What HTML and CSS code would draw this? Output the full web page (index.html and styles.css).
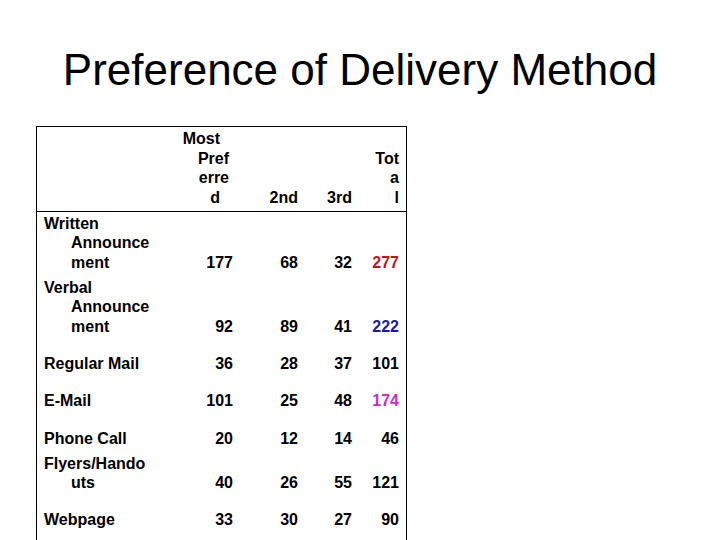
FILE: index.html
```html
<!DOCTYPE html>
<html>
<head>
<meta charset="utf-8">
<link rel="stylesheet" href="styles.css">
</head>
<body>
<h1 class="title">Preference of Delivery Method</h1>
<div class="table">
  <div class="cell head label"></div>
  <div class="cell head num">
    <span class="hl hl-a">Most</span>
    <span class="hl hl-b">Pref</span>
    <span class="hl hl-b">erre</span>
    <span class="hl hl-a">d</span>
  </div>
  <div class="cell head num">2nd</div>
  <div class="cell head num">3rd</div>
  <div class="cell head num">Tot<br>a<br>l</div>

  <div class="cell label"><span class="txt">Written<br>Announce<br>ment</span></div>
  <div class="cell num">177</div>
  <div class="cell num">68</div>
  <div class="cell num">32</div>
  <div class="cell num red">277</div>

  <div class="cell label"><span class="txt">Verbal<br>Announce<br>ment</span></div>
  <div class="cell num">92</div>
  <div class="cell num">89</div>
  <div class="cell num">41</div>
  <div class="cell num blue">222</div>

  <div class="cell label"><span class="txt">Regular Mail</span></div>
  <div class="cell num">36</div>
  <div class="cell num">28</div>
  <div class="cell num">37</div>
  <div class="cell num">101</div>

  <div class="cell label"><span class="txt">E-Mail</span></div>
  <div class="cell num">101</div>
  <div class="cell num">25</div>
  <div class="cell num">48</div>
  <div class="cell num magenta">174</div>

  <div class="cell label tall"><span class="txt">Phone Call</span></div>
  <div class="cell num tall">20</div>
  <div class="cell num tall">12</div>
  <div class="cell num tall">14</div>
  <div class="cell num tall">46</div>

  <div class="cell label"><span class="txt">Flyers/Hando<br>uts</span></div>
  <div class="cell num">40</div>
  <div class="cell num">26</div>
  <div class="cell num">55</div>
  <div class="cell num">121</div>

  <div class="cell label"><span class="txt">Webpage</span></div>
  <div class="cell num">33</div>
  <div class="cell num">30</div>
  <div class="cell num">27</div>
  <div class="cell num">90</div>

  <div class="spacer"></div>
</div>
</body>
</html>
```
FILE: styles.css
```css
html, body {
  margin: 0;
  padding: 0;
  background: #ffffff;
}

body {
  font-family: "Liberation Sans", Arial, sans-serif;
  color: #000000;
  width: 720px;
  height: 540px;
  overflow: hidden;
}

.title {
  margin: 44px 0 0 0;
  font-size: 44px;
  font-weight: normal;
  line-height: 51px;
  text-align: center;
}

.table {
  margin: 31px 0 0 36px;
  width: 371px;
  box-sizing: border-box;
  border: 1px solid #000;
  display: grid;
  grid-template-columns: 123px 80px 65px 54px 47px;
  grid-auto-rows: minmax(37px, auto);
  font-size: 16px;
  font-weight: bold;
  line-height: 19.5px;
}

.cell {
  display: flex;
  flex-direction: column;
  justify-content: flex-end;
  padding: 2px 7px 3.5px 0;
  box-sizing: border-box;
}

.cell.tall {
  min-height: 38px;
}

.cell.head {
  border-bottom: 1px solid #000;
}

.label {
  padding-left: 7px;
}

.txt {
  display: block;
  padding-left: 27px;
  text-indent: -27px;
}

.num {
  text-align: right;
  align-items: flex-end;
}

.hl {
  display: block;
}

.hl-a {
  padding-right: 13px;
}

.hl-b {
  padding-right: 4px;
}

.red { color: #c4141c; }
.blue { color: #1c1ca6; }
.magenta { color: #c72fc7; }

.spacer {
  grid-column: 1 / -1;
  height: 7px;
}
```
